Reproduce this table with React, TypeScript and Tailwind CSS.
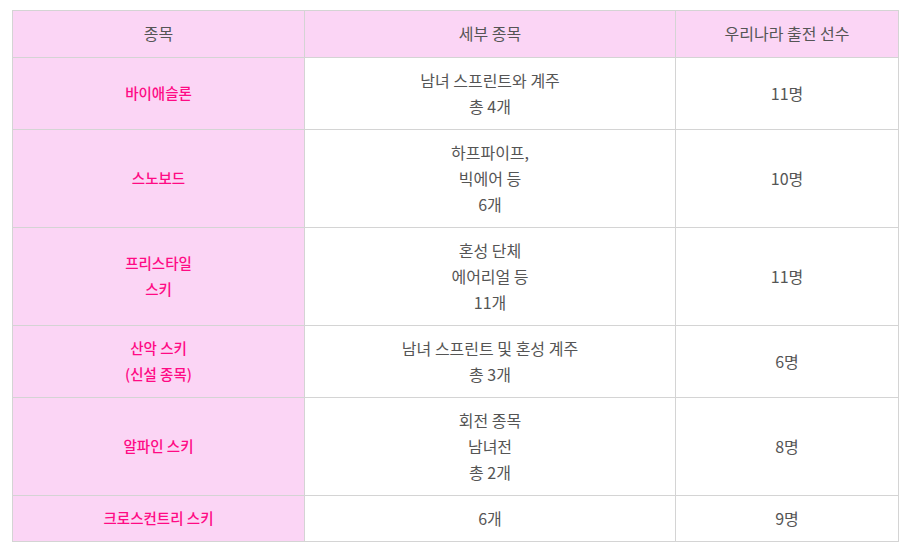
import React from "react";

const rows: { name: string[]; detail: string[]; count: string }[] = [
  { name: ["바이애슬론"], detail: ["남녀 스프린트와 계주", "총 4개"], count: "11명" },
  { name: ["스노보드"], detail: ["하프파이프,", "빅에어 등", "6개"], count: "10명" },
  { name: ["프리스타일", "스키"], detail: ["혼성 단체", "에어리얼 등", "11개"], count: "11명" },
  { name: ["산악 스키", "(신설 종목)"], detail: ["남녀 스프린트 및 혼성 계주", "총 3개"], count: "6명" },
  { name: ["알파인 스키"], detail: ["회전 종목", "남녀전", "총 2개"], count: "8명" },
  { name: ["크로스컨트리 스키"], detail: ["6개"], count: "9명" },
];

export default function App() {
  return (
    <div
      className="w-[915px] h-[560px] bg-white pt-[10px] pl-[12px]"
      style={{ fontFamily: '"Noto Sans CJK KR", "Noto Sans", sans-serif' }}
    >
      <table className="border-collapse w-[886px] table-fixed text-[16px] leading-[26px] text-[#555]">
        <colgroup>
          <col className="w-[292px]" />
          <col className="w-[371px]" />
          <col className="w-[223px]" />
        </colgroup>
        <thead>
          <tr className="bg-[#fbd5f5] h-[47px]">
            <th className="border border-[#d4d4d4] font-normal text-center pt-0 pb-[2px] px-0">종목</th>
            <th className="border border-[#d4d4d4] font-normal text-center pt-0 pb-[2px] px-0">세부 종목</th>
            <th className="border border-[#d4d4d4] font-normal text-center pt-0 pb-[2px] px-0">우리나라 출전 선수</th>
          </tr>
        </thead>
        <tbody>
          {rows.map((r, i) => (
            <tr key={i}>
              <td className="border border-[#d4d4d4] bg-[#fbd5f5] text-center pt-[9px] pb-[10px] px-0 text-[#ff0a84] text-[14.5px] leading-[26px] font-medium">
                {r.name.map((l, j) => (
                  <div key={j}>{l}</div>
                ))}
              </td>
              <td className="border border-[#d4d4d4] bg-white text-center pt-[9px] pb-[10px] px-0">
                {r.detail.map((l, j) => (
                  <div key={j}>{l}</div>
                ))}
              </td>
              <td className="border border-[#d4d4d4] bg-white text-center pt-[9px] pb-[10px] px-0">{r.count}</td>
            </tr>
          ))}
        </tbody>
      </table>
    </div>
  );
}
